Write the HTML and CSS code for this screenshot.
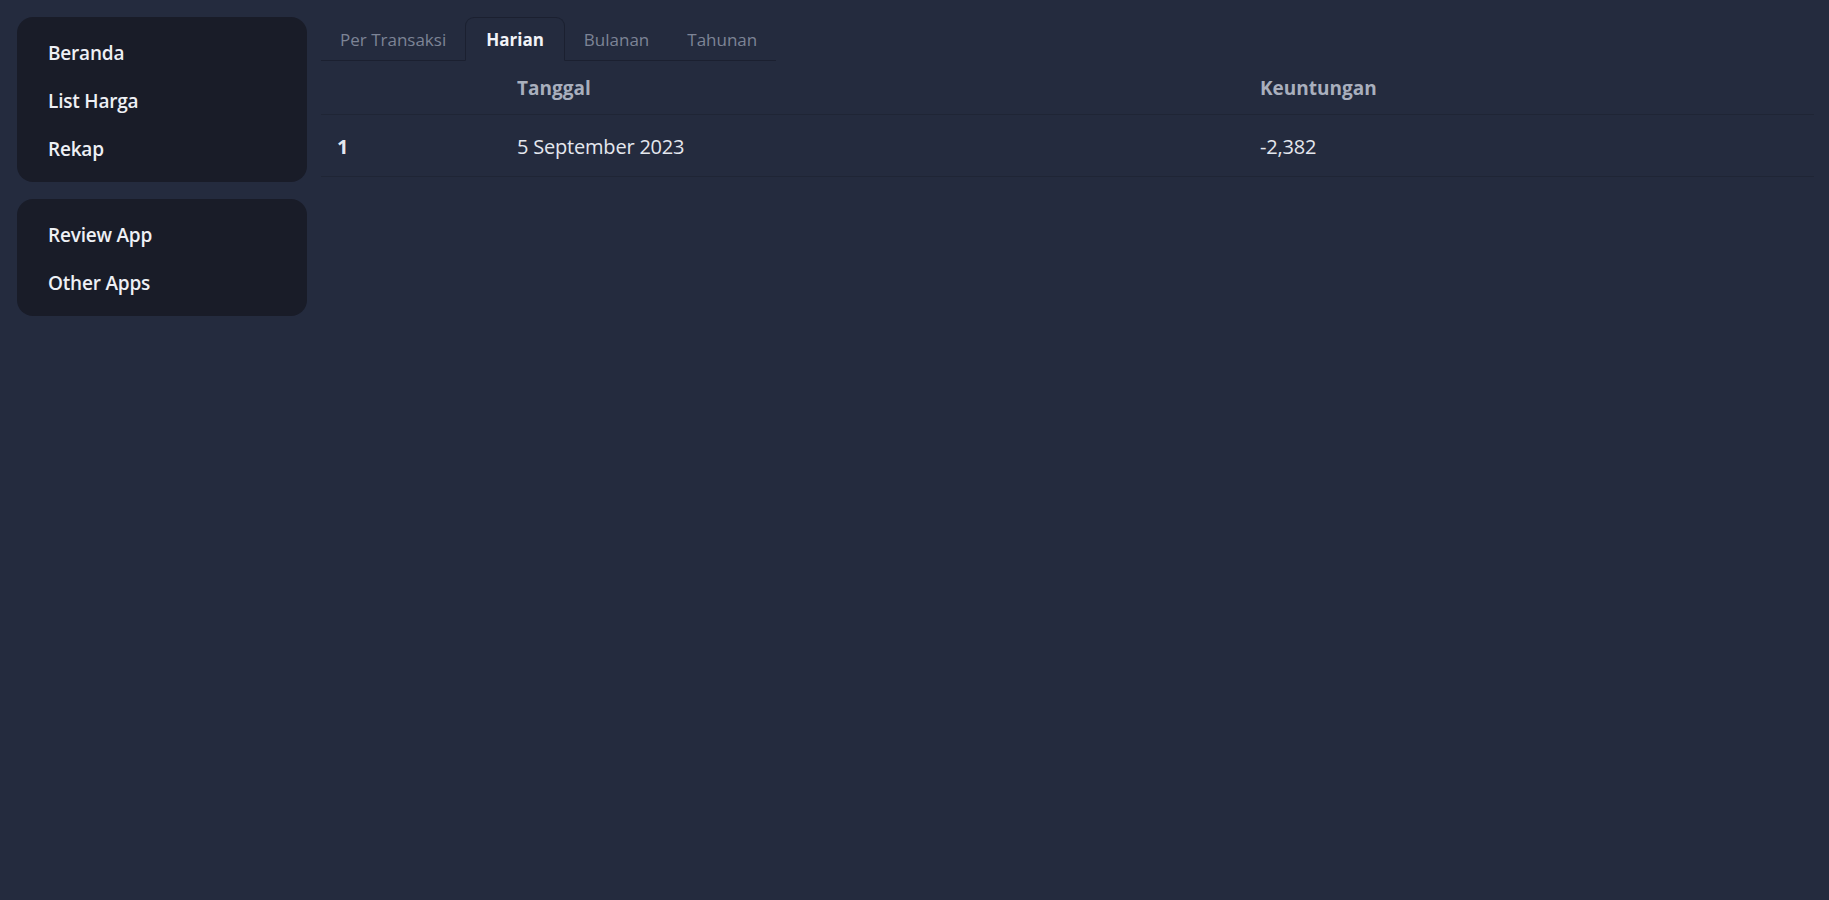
FILE: index.html
```
<!DOCTYPE html>
<html lang="id">
<head>
  <meta charset="UTF-8" />
  <meta name="viewport" content="width=device-width, initial-scale=1.0"/>
  <title>Rekap</title>
  <link rel="stylesheet" href="styles.css">
</head>
<body>
  <div class="layout">
    <aside class="sidebar">
      <ul class="menu">
        <li><a href="#">Beranda</a></li>
        <li><a href="#">List Harga</a></li>
        <li><a href="#">Rekap</a></li>
      </ul>
      <ul class="menu">
        <li><a href="#">Review App</a></li>
        <li><a href="#">Other Apps</a></li>
      </ul>
    </aside>

    <main class="content">
      <div class="tabs">
        <a class="tab">Per Transaksi</a>
        <a class="tab tab-active">Harian</a>
        <a class="tab">Bulanan</a>
        <a class="tab">Tahunan</a>
      </div>

      <table class="table">
        <colgroup>
          <col class="col-no">
          <col class="col-date">
          <col>
        </colgroup>
        <thead>
          <tr>
            <th></th>
            <th>Tanggal</th>
            <th>Keuntungan</th>
          </tr>
        </thead>
        <tbody>
          <tr>
            <th>1</th>
            <td>5 September 2023</td>
            <td>-2,382</td>
          </tr>
        </tbody>
      </table>
    </main>
  </div>
</body>
</html>
```

FILE: styles.css
```
body {
  background-color: #242b3e;
  color: #e4e7ee;
  font-family: 'Open Sans', 'Noto Sans', sans-serif;
  margin: 0;
  min-height: 100vh;
}

.layout {
  display: flex;
  gap: 14px;
  padding: 17px 15px 17px 17px;
}

.sidebar {
  width: 290px;
  flex-shrink: 0;
  display: flex;
  flex-direction: column;
  gap: 17px;
}

.menu {
  list-style: none;
  margin: 0;
  padding: 12px 0 9px;
  background-color: #191c28;
  border-radius: 16px;
}

.menu a {
  display: flex;
  align-items: center;
  height: 48px;
  padding-left: 31px;
  color: #eef0f5;
  font-size: 19px;
  font-weight: 600;
  letter-spacing: -0.2px;
  text-decoration: none;
}

.content {
  flex: 1;
  min-width: 0;
}

.tabs {
  display: inline-flex;
  height: 43px;
  border-bottom: 1px solid #1b2030;
}

.tab {
  display: flex;
  align-items: center;
  padding: 0 19px;
  font-size: 17px;
  color: #7d8496;
  cursor: pointer;
  margin-bottom: -1px;
}

.tab-active {
  color: #f2f4f8;
  font-weight: 700;
  border: 1px solid #1b2030;
  border-bottom-color: #242b3e;
  border-radius: 9px 9px 0 0;
  padding: 0 20px;
}

.table {
  width: 100%;
  border-collapse: collapse;
  font-size: 20px;
}

.col-no {
  width: 180px;
}

.col-date {
  width: 743px;
}

.table th,
.table td {
  text-align: left;
  padding: 0 16px;
  border-bottom: 1px solid #1f2535;
}

.table thead th {
  height: 53px;
  color: #a9afbd;
  font-weight: 700;
  font-size: 19px;
}

.table tbody th,
.table tbody td {
  height: 59px;
  padding-top: 2px;
  font-weight: 500;
  letter-spacing: -0.2px;
}

.table tbody th {
  font-weight: 700;
}
```
